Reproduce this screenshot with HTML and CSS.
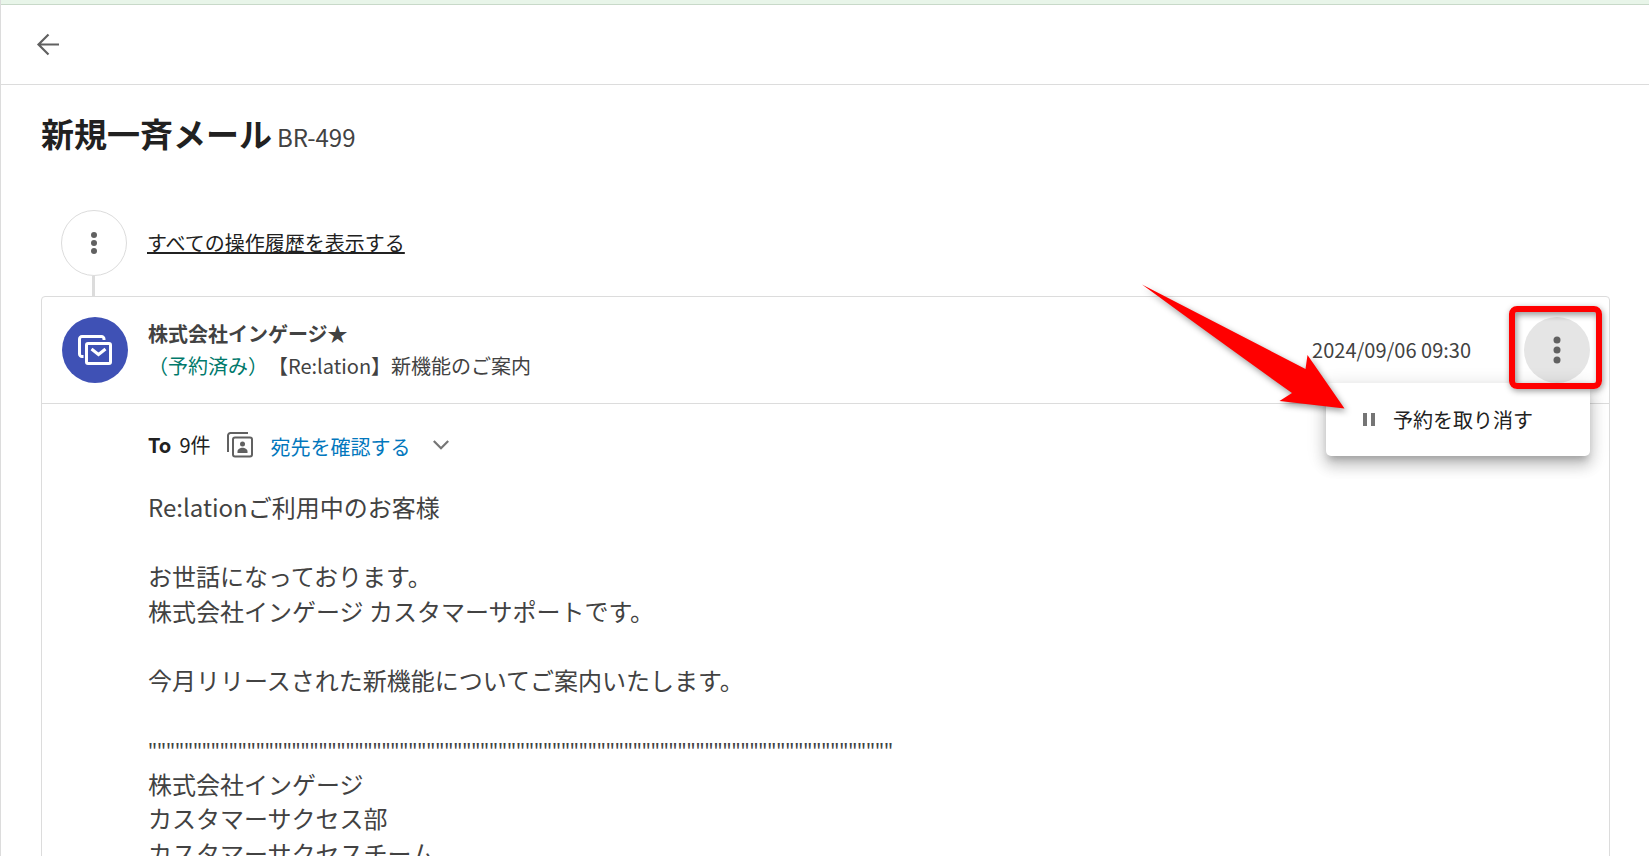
FILE: index.html
```html
<!DOCTYPE html>
<html lang="ja">
<head>
    <meta charset="UTF-8">
    <meta name="viewport" content="width=device-width, initial-scale=1.0">
    <title>新規一斉メール BR-499</title>
    <link rel="stylesheet" href="styles.css">
</head>
<body>
    <div class="notice-bar"></div>
    <header class="topbar">
        <button type="button" class="back-btn" aria-label="戻る">
            <svg width="24" height="24" viewBox="0 0 24 24" fill="none" stroke="currentColor" stroke-width="2.2">
                <path d="M23 11.500H3M12.500 1.500l-10 10 10 10"/>
            </svg>
        </button>
    </header>

    <main class="content">
        <div class="title">
            <h1>新規一斉メール</h1>
            <span class="ticket-id">BR-499</span>
        </div>

        <div class="history">
            <span class="history-icon">
                <svg width="8" height="24" viewBox="0 0 8 24" fill="currentColor">
                    <circle cx="4" cy="4" r="3"/>
                    <circle cx="4" cy="12" r="3"/>
                    <circle cx="4" cy="20" r="3"/>
                </svg>
            </span>
            <a href="#" class="history-link">すべての操作履歴を表示する</a>
        </div>
        <div class="stem"></div>

        <article class="card">
            <div class="card-header">
                <div class="avatar">
                    <svg width="34" height="30" viewBox="0 0 34 30" fill="none" stroke="currentColor" stroke-width="3" stroke-linejoin="round">
                        <path d="M26 5V4a2.500 2.500 0 0 0-2.500-2.500H4A2.500 2.500 0 0 0 1.500 4v15A2.500 2.500 0 0 0 4 21.500h1.500"/>
                        <rect x="8.500" y="8.500" width="24" height="20" rx="1.500"/>
                        <path d="M13.500 14l7 5.500 7-5.500" stroke-linejoin="miter"/>
                    </svg>
                </div>
                <div class="sender">
                    <div class="sender-name">株式会社インゲージ★</div>
                    <div class="subject"><span class="status">（予約済み）</span>【Re:lation】新機能のご案内</div>
                </div>
                <time class="date">2024/09/06 09:30</time>
                <div class="actions">
                    <button type="button" class="more-btn" aria-label="メニュー">
                        <svg width="8" height="28" viewBox="0 0 8 28" fill="currentColor">
                            <circle cx="4" cy="4" r="3.500"/>
                            <circle cx="4" cy="14" r="3.500"/>
                            <circle cx="4" cy="24" r="3.500"/>
                        </svg>
                    </button>
                    <div class="menu">
                        <button type="button" class="menu-item">
                            <svg width="12" height="14" viewBox="0 0 12 14" fill="#757575">
                                <path d="M0 0h4v13H0zM8 0h4v13H8z"/>
                            </svg>
                            予約を取り消す
                        </button>
                    </div>
                    <div class="highlight"></div>
                    <svg class="pointer" width="205" height="126" viewBox="0 0 205 126">
                        <path fill="#f00" d="M1 0.500L164.500 85L166.500 71L203.500 124.500L138.500 117L151 109Q74 54 1 0.500z"/>
                    </svg>
                </div>
            </div>

            <div class="card-body">
                <div class="recipients">
                    <strong>To</strong>
                    <span class="count">9件</span>
                    <svg class="contacts-icon" width="26" height="26" viewBox="0 0 26 26" fill="none" stroke="currentColor" stroke-width="2">
                        <path d="M1 20V3.500A2.500 2.500 0 0 1 3.500 1H21"/>
                        <rect x="6" y="5.500" width="19" height="19" rx="2"/>
                        <circle cx="15.500" cy="12" r="2.500" fill="currentColor" stroke="none"/>
                        <path d="M10.500 21v-1.500c0-2.500 3-3.700 5-3.700s5 1.200 5 3.700V21z" fill="currentColor" stroke="none"/>
                    </svg>
                    <a href="#" class="recipients-link">宛先を確認する</a>
                    <svg class="chevron" width="16" height="10" viewBox="0 0 16 10" fill="none" stroke="currentColor" stroke-width="2.200">
                        <path d="M0.800 1L8 8.200 15.200 1"/>
                    </svg>
                </div>
                <div class="message">Re:lationご利用中のお客様

お世話になっております。
株式会社インゲージ カスタマーサポートです。

今月リリースされた新機能についてご案内いたします。

<span class="separator">"""""""""""""""""""""""""""""""""""""""""""""""""""""""""""""""""""""""""""""""""""</span>
株式会社インゲージ
カスタマーサクセス部
カスタマーサクセスチーム</div>
            </div>
        </article>
    </main>
</body>
</html>
```
FILE: styles.css
```css
* {
    margin: 0;
    padding: 0;
    box-sizing: border-box;
}

body {
    height: 100vh;
    overflow: hidden;
    border-left: 1px solid #dcdcdc;
    background: #fff;
    color: #424242;
    font-family: "Noto Sans CJK JP", sans-serif;
    font-size: 20px;
    line-height: 32px;
}

button {
    border: none;
    background: none;
    font: inherit;
    color: inherit;
    cursor: pointer;
}

svg {
    display: block;
    flex-shrink: 0;
}

.notice-bar {
    height: 5px;
    background: #e8f5e9;
    border-bottom: 1px solid #c8d9c9;
}

.topbar {
    height: 80px;
    padding: 0 35px;
    display: flex;
    align-items: center;
    border-bottom: 1px solid #dcdcdc;
}

.back-btn {
    color: #616161;
}

.content {
    padding: 22px 39px 0 40px;
}

.title {
    display: flex;
    align-items: baseline;
    gap: 5px;
    line-height: 52px;
}

h1 {
    font-size: 33px;
    font-weight: 700;
    color: #212121;
}

.ticket-id {
    font-size: 24px;
}

.history {
    margin-top: 47px;
    padding-left: 20px;
    display: flex;
    align-items: center;
    gap: 20px;
}

.history-icon {
    width: 66px;
    height: 66px;
    border: 1px solid #dcdcdc;
    border-radius: 50%;
    display: flex;
    align-items: center;
    justify-content: center;
    color: #616161;
}

.history-link {
    color: #212121;
}

.stem {
    width: 3px;
    height: 20px;
    margin-left: 51px;
    background: #dcdcdc;
}

.card {
    border: 1px solid #dcdcdc;
    border-radius: 4px;
}

.card-header {
    height: 107px;
    padding: 0 19px 0 20px;
    display: flex;
    align-items: center;
    border-bottom: 1px solid #dcdcdc;
}

.avatar {
    width: 66px;
    height: 66px;
    margin-right: 20px;
    border-radius: 50%;
    background: #3f51b5;
    color: #fff;
    display: flex;
    align-items: center;
    justify-content: center;
}

.sender {
    flex: 1;
}

.sender-name {
    font-weight: 700;
}

.subject {
    text-spacing-trim: space-all;
}

.status {
    color: #00796b;
}

.date {
    margin-right: 53px;
}

.actions {
    position: relative;
}

.more-btn {
    width: 66px;
    height: 66px;
    border-radius: 50%;
    background: #e5e5e5;
    color: #616161;
    display: flex;
    align-items: center;
    justify-content: center;
}

.menu {
    position: absolute;
    top: 100%;
    right: 0;
    width: 264px;
    padding: 10px 0;
    background: #fff;
    border-radius: 5px;
    box-shadow: 0 6px 7px -3px rgba(0, 0, 0, 0.2), 0 10px 14px 1px rgba(0, 0, 0, 0.14), 0 4px 18px 3px rgba(0, 0, 0, 0.12);
}

.menu-item {
    width: 100%;
    height: 53px;
    padding: 0 37px;
    display: flex;
    align-items: center;
    gap: 18px;
    color: #212121;
}

/* callout frame and arrow over the menu */
.highlight {
    position: absolute;
    top: -11px;
    right: -12px;
    width: 93px;
    height: 83px;
    border: 6px solid #f00;
    border-radius: 8px;
    box-shadow: 1px 2px 6px rgba(0, 0, 0, 0.4), inset 2px 3px 6px rgba(0, 0, 0, 0.4);
}

.pointer {
    position: absolute;
    top: -33px;
    right: 244px;
    overflow: visible;
    filter: drop-shadow(2px 3px 3px rgba(0, 0, 0, 0.4));
}

.card-body {
    padding: 23px 20px 0 106px;
}

.recipients {
    display: flex;
    align-items: center;
    color: #212121;
}

.count {
    margin-left: 8px;
}

.contacts-icon {
    margin-left: 17px;
    color: #616161;
}

.recipients-link {
    margin-left: 17px;
    padding-top: 4px;
    color: #0277bd;
    text-decoration: none;
}

.chevron {
    margin-left: 23px;
    color: #757575;
}

.message {
    margin-top: 27px;
    font-size: 24px;
    line-height: 1.44;
    white-space: pre-wrap;
}

.separator {
    font-family: "Noto Sans", sans-serif;
    font-size: 22px;
}
```
